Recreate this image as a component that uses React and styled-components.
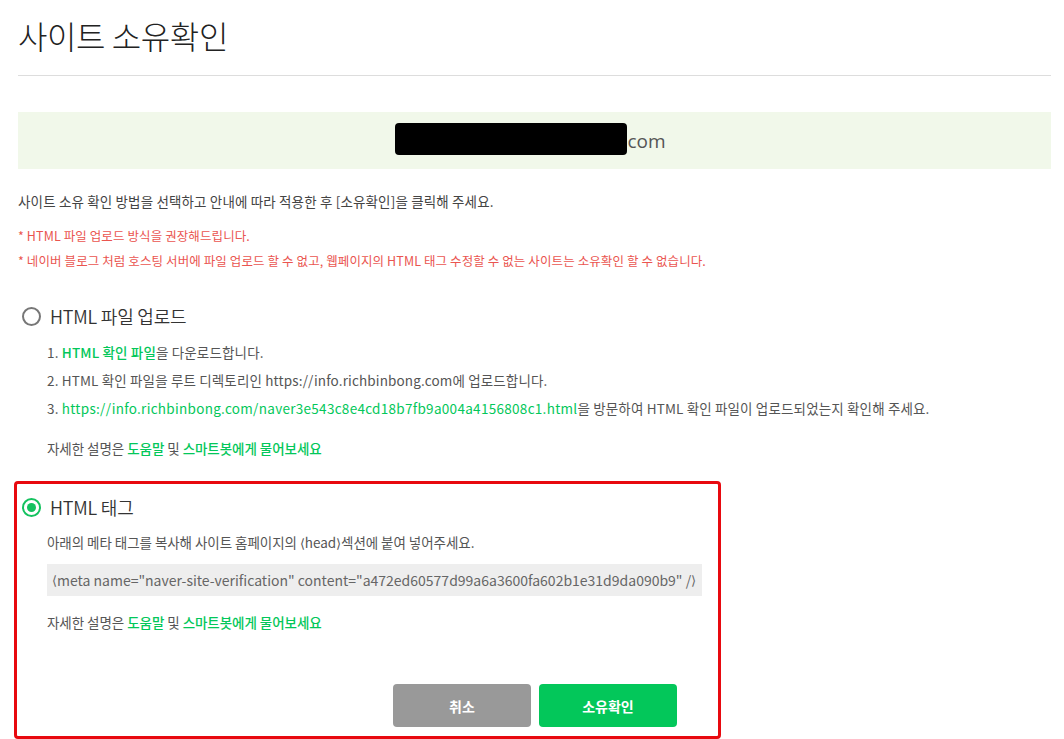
import React from 'react';
import styled, { createGlobalStyle } from 'styled-components';

const GlobalStyle = createGlobalStyle`
  html, body { margin: 0; padding: 0; background: #fff; }
  body {
    font-family: "Noto Sans CJK KR", "Noto Sans", sans-serif;
    color: #333;
  }
`;

const Page = styled.div`
  width: 1033px;
  padding: 0 0 0 18px;
`;

const Title = styled.h1`
  margin: 0;
  padding-top: 12px;
  height: 63px;
  border-bottom: 1px solid #ddd;
  font-size: 32px;
  font-weight: 300;
  color: #222;
  letter-spacing: -0.4px;
  line-height: 46px;
`;

const DomainBar = styled.div`
  margin-top: 36px;
  height: 57px;
  background: #f1f8ea;
  display: flex;
  align-items: center;
  justify-content: center;
  font-family: "Open Sans", "Noto Sans", sans-serif;
  font-size: 19px;
  color: #555;
  padding-right: 8px;
`;

const Redacted = styled.span`
  display: inline-block;
  width: 232px;
  height: 32px;
  margin-top: -3px;
  background: #000;
  border-radius: 4px;
`;

const Guide = styled.p`
  margin: 22px 0 0;
  font-size: 13.5px;
  color: #444;
  letter-spacing: 0.15px;
  line-height: 20px;
`;

const Notice = styled.p`
  margin: ${p => p.$first ? '15px' : '5px'} 0 0;
  font-size: 12.5px;
  color: #ea5550;
  letter-spacing: 0.1px;
  line-height: 20px;
`;

const Option = styled.section`
  margin-top: ${p => p.$mt}px;
  margin-left: ${p => p.$boxed ? '-4px' : '0'};
  width: ${p => p.$boxed ? '700px' : 'auto'};
  border: ${p => p.$boxed ? '3px solid #e8090f' : 'none'};
  border-radius: 4px;
  padding: ${p => p.$boxed ? '11px 0 9px 1px' : '0'};
`;

const RadioRow = styled.label`
  display: flex;
  align-items: center;
  gap: 9px;
  height: 24px;
  padding-left: 4px;
  font-size: 18px;
  font-weight: 350;
  color: #333;
  letter-spacing: -0.2px;
`;

const Radio = styled.span`
  width: 19px;
  height: 19px;
  box-sizing: border-box;
  border-radius: 50%;
  border: 2px solid ${p => p.$on ? '#14c25f' : '#777'};
  display: flex;
  align-items: center;
  justify-content: center;
  &::after {
    content: '';
    display: ${p => p.$on ? 'block' : 'none'};
    width: 9px;
    height: 9px;
    border-radius: 50%;
    background: #14c25f;
  }
`;

const Body = styled.div`
  padding-left: 29px;
`;

const Line = styled.p`
  margin: ${p => p.$mt || 0}px 0 0;
  font-size: 13.5px;
  line-height: 20px;
  color: #555;
  letter-spacing: ${p => p.$wide ? '0.15px' : '-0.05px'};
  white-space: nowrap;
`;

const Green = styled.span`
  color: #03c75a;
  font-weight: ${p => p.$bold ? 500 : 400};
  letter-spacing: ${p => p.$wide ? '0.3px' : 'inherit'};
`;

const Angle = styled.span`
  font-family: "DejaVu Sans", sans-serif;
  font-weight: 300;
  font-size: 0.95em;
`;

const MetaBox = styled.div`
  margin-top: 10px;
  width: 655px;
  height: 32px;
  box-sizing: border-box;
  background: #eeeeee;
  display: flex;
  align-items: center;
  padding-left: 5px;
  font-size: 14px;
  color: #666;
  letter-spacing: 0;
  white-space: nowrap;
`;

const Actions = styled.div`
  margin-top: 52px;
  display: flex;
  gap: 8px;
  padding-left: 346px;
`;

const Button = styled.button`
  width: 138px;
  height: 43px;
  border: none;
  border-radius: 4px;
  background: ${p => p.$primary ? '#03c75a' : '#999'};
  color: #fff;
  font-family: inherit;
  font-size: 14px;
  font-weight: 700;
  cursor: pointer;
`;

function HelpLine({ mt }) {
  return (
    <Line $mt={mt}>
      자세한 설명은 <Green $bold>도움말</Green> 및 <Green $bold>스마트봇에게 물어보세요</Green>
    </Line>
  );
}

export default function App() {
  return (
    <Page>
      <GlobalStyle />
      <Title>사이트 소유확인</Title>
      <DomainBar>
        <Redacted />com
      </DomainBar>
      <Guide>사이트 소유 확인 방법을 선택하고 안내에 따라 적용한 후 [소유확인]을 클릭해 주세요.</Guide>
      <Notice $first>* HTML 파일 업로드 방식을 권장해드립니다.</Notice>
      <Notice>* 네이버 블로그 처럼 호스팅 서버에 파일 업로드 할 수 없고, 웹페이지의 HTML 태그 수정할 수 없는 사이트는 소유확인 할 수 없습니다.</Notice>

      <Option $mt={33}>
        <RadioRow><Radio />HTML 파일 업로드</RadioRow>
        <Body>
          <Line $wide $mt={14}>1. <Green $bold>HTML 확인 파일</Green>을 다운로드합니다.</Line>
          <Line $wide $mt={8}>2. HTML 확인 파일을 루트 디렉토리인 https://info.richbinbong.com에 업로드합니다.</Line>
          <Line $wide $mt={8}>3. <Green $wide>https://info.richbinbong.com/naver3e543c8e4cd18b7fb9a004a4156808c1.html</Green>을 방문하여 HTML 확인 파일이 업로드되었는지 확인해 주세요.</Line>
          <HelpLine mt={20} />
        </Body>
      </Option>

      <Option $boxed $mt={23}>
        <RadioRow><Radio $on />HTML 태그</RadioRow>
        <Body>
          <Line $mt={13}>아래의 메타 태그를 복사해 사이트 홈페이지의 <Angle>&#x27E8;</Angle>head<Angle>&#x27E9;</Angle>섹션에 붙여 넣어주세요.</Line>
          <MetaBox><Angle>&#x27E8;</Angle>meta name="naver-site-verification" content="a472ed60577d99a6a3600fa602b1e31d9da090b9" /<Angle>&#x27E9;</Angle></MetaBox>
          <HelpLine mt={16} />
          <Actions>
            <Button>취소</Button>
            <Button $primary>소유확인</Button>
          </Actions>
        </Body>
      </Option>
    </Page>
  );
}
